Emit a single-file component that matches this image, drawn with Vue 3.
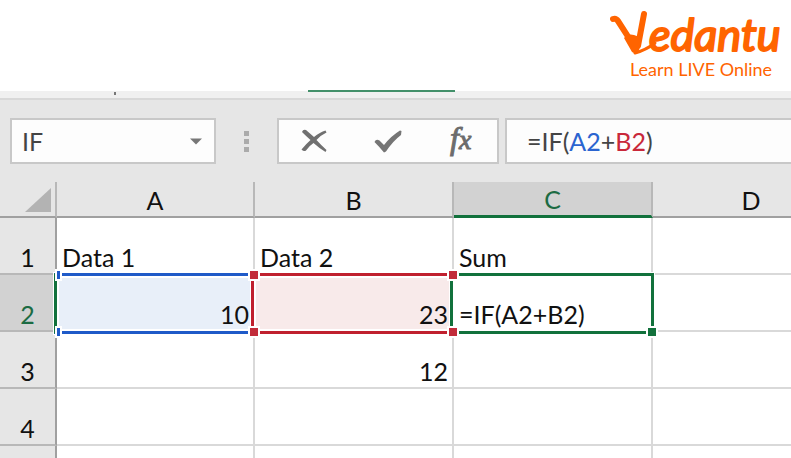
<script setup>
import { ref, computed } from 'vue'

const nameBox = ref('IF')
const formula = ref('=IF(A2+B2)')
const refColors = { A2: 'blue', B2: 'red' }
const tokens = computed(() =>
  formula.value.split(/([A-Z]+\d+)/).filter(Boolean).map((text) => ({ text, tone: refColors[text] || '' }))
)

const columns = ['A', 'B', 'C', 'D']
const rows = [
  { n: 1, cells: ['Data 1', 'Data 2', 'Sum', ''] },
  { n: 2, cells: [10, 23, '=IF(A2+B2)', ''] },
  { n: 3, cells: ['', 12, '', ''] },
  { n: 4, cells: ['', '', '', ''] },
  { n: '', cells: ['', '', '', ''] }
]
const rangeNames = ['range-a', 'range-b', 'range-c']
const rangeOf = (row, i) => (row.n === 2 ? rangeNames[i] : undefined)
</script>

<template>
  <main class="page">
    <header class="brand">
      <div class="logo">
        <svg class="wordmark" viewBox="0 0 172 48" role="img" aria-label="Vedantu">
          <path d="M3 11Q6 10 8 13L26 41" class="mark" />
          <path d="M34 6L28 38" class="mark" />
          <path d="M14 30Q18 25 24 27Q28 29 32 28L29 42L26 46L22 44Z" class="fill" />
          <path d="M25 45Q36 42 45 35" class="tail" />
          <text x="39" y="43" class="letters">edantu</text>
        </svg>
        <p class="tagline">Learn LIVE Online</p>
      </div>
    </header>

    <div class="ribbon"><span class="tick"></span><span class="tab-line"></span></div>

    <div class="formula-bar">
      <div class="name-box">
        <input v-model="nameBox" aria-label="Name box" class="name-input" />
        <button class="drop" aria-label="Open name list">
          <svg width="12" height="7" viewBox="0 0 12 7"><path d="M0 0.5H12L6 6.5Z" fill="#777" /></svg>
        </button>
      </div>
      <div class="grip"><i></i><i></i><i></i></div>
      <div class="actions">
        <button aria-label="Cancel">
          <svg width="28" height="26" viewBox="0 0 28 26">
            <path d="M1 4Q2 1 5 2L13 9Q19 4 24.500 2.500L25.500 4.500Q20 7 15.500 12Q20 17 25.500 22L24.500 24Q18 20 12.500 15Q8 18 5 22.500Q3 24 0.500 21.500Q5 16 9.500 12Q5 8 1 4Z" fill="#707070" />
          </svg>
        </button>
        <button aria-label="Enter">
          <svg width="28" height="26" viewBox="0 0 28 26">
            <path d="M0.500 14Q2 10.500 5.500 12.500L10 17Q17 8 26 2.500L27.500 3L27 7Q19 13 12 23.500L10 24.500Q6 19.500 0.500 14Z" fill="#757575" />
          </svg>
        </button>
        <button aria-label="Insert function" class="fx"><span class="f">f</span><span class="x">x</span></button>
      </div>
      <div class="formula">
        <div class="colored" aria-hidden="true"><span v-for="(t, i) in tokens" :key="i" :class="t.tone">{{ t.text }}</span></div>
        <input v-model="formula" aria-label="Formula" class="formula-input" spellcheck="false" />
      </div>
    </div>

    <div class="sheet">
      <table>
        <colgroup>
          <col class="c-head" /><col class="c-mid" /><col class="c-wide" /><col class="c-wide" /><col class="c-mid" />
        </colgroup>
        <thead>
          <tr>
            <th class="corner"><svg width="26" height="24" viewBox="0 0 26 24"><path d="M26 0V24H0Z" fill="#b3b3b3" /></svg></th>
            <th v-for="c in columns" :key="c" scope="col" :class="{ active: c === 'C' }">{{ c }}</th>
          </tr>
        </thead>
        <tbody>
          <tr v-for="(row, r) in rows" :key="r">
            <th scope="row" :class="{ active: row.n === 2 }">{{ row.n }}</th>
            <td v-for="(cell, i) in row.cells" :key="i" :class="{ num: typeof cell === 'number' }">
              <template v-if="rangeOf(row, i)">
                <div class="range" :class="rangeOf(row, i)"></div>
                <i class="handle top" :class="rangeOf(row, i)"></i>
                <i class="handle bottom" :class="rangeOf(row, i)"></i>
                <i v-if="i === 2" class="handle end"></i>
              </template>
              <span class="value">{{ cell }}</span>
            </td>
          </tr>
        </tbody>
      </table>
    </div>
  </main>
</template>

<style>
body { background: #fff; overflow: hidden; }
</style>

<style scoped>
.page { font-family: Lato, "Open Sans", sans-serif; height: 100vh; overflow: hidden; display: flex; flex-direction: column; color: #111; }
.brand { display: flex; justify-content: flex-end; flex: none; height: 91px; padding: 8px 9px 0 0; box-sizing: border-box; }
.logo { width: 172px; color: #ff6400; }
.wordmark { display: block; width: 172px; height: 48px; overflow: visible; }
.mark { fill: none; stroke: currentColor; stroke-width: 6; stroke-linecap: round; stroke-linejoin: round; }
.fill { fill: currentColor; }
.tail { fill: none; stroke: currentColor; stroke-width: 3; stroke-linecap: round; }
.letters { font: italic 45px Lato, sans-serif; fill: currentColor; stroke: currentColor; stroke-width: 2; stroke-linejoin: round; }
.tagline { margin: 2px 0 0; padding-left: 20px; font-size: 18px; line-height: 22px; white-space: nowrap; }

.ribbon { flex: none; position: relative; height: 9px; box-sizing: border-box; background: #f0f0f0; border-bottom: 2px solid #d8d8d8; }
.tab-line { position: absolute; left: 308px; top: -1px; width: 147px; height: 2px; background: #43906a; }
.tick { position: absolute; left: 114px; top: 1px; width: 2px; height: 3px; background: #777; }

.formula-bar { flex: none; display: flex; padding: 18px 0 18px 10px; background: #e6e6e6; }
.name-box, .actions, .formula { box-sizing: border-box; height: 46px; border: 2px solid #c8c8c8; background: #fdfdfd; }
.name-box { width: 206px; display: flex; align-items: center; }
.name-input { flex: 1; min-width: 0; padding: 0 0 0 10px; border: 0; outline: 0; background: none; font: 25px/42px Lato, sans-serif; color: #444; }
button { display: flex; align-items: center; justify-content: center; border: 0; padding: 0; background: none; }
.drop { width: 36px; height: 42px; }
.grip { width: 61px; display: flex; flex-direction: column; align-items: center; justify-content: center; gap: 3px; }
.grip i { width: 5px; height: 5px; background: #ababab; }
.actions { width: 222px; display: grid; grid-template-columns: repeat(3, 1fr); }
.fx { font: italic 32px/36px "Liberation Serif", serif; color: #6c6c6c; align-items: baseline; -webkit-text-stroke: 1px #6c6c6c; }
.fx .x { font-size: 28px; }
.formula { flex: 1; min-width: 0; margin-left: 6px; border-right: 0; display: grid; }
.colored, .formula-input { grid-area: 1 / 1; padding: 0 0 0 20px; font: 25px/42px Lato, sans-serif; white-space: pre; color: #444; }
.formula-input { border: 0; outline: 0; background: none; color: transparent; caret-color: #444; min-width: 0; }
.blue { color: #2b64d0; }
.red { color: #c9283a; }

.sheet { flex: 1; overflow: hidden; background: #fff; }
table { width: 851px; table-layout: fixed; border-collapse: separate; border-spacing: 0; }
.c-head { width: 57px; }
.c-wide { width: 199px; }
.c-mid { width: 198px; }
th, td { position: relative; box-sizing: border-box; height: 57px; border-right: 2px solid #d9d9d9; border-bottom: 2px solid #d9d9d9; vertical-align: bottom; text-align: left; font-size: 25px; line-height: 32px; font-weight: 400; white-space: nowrap; }
td { padding: 0 4px 0 5px; }
th { background: #e6e6e6; text-align: center; }
thead th { height: 36px; padding: 0; border-right-color: #b8b8b8; border-bottom-color: #a0a0a0; }
tbody th { padding: 0; border-right-color: #a0a0a0; border-bottom-color: #b8b8b8; }
th.active { background: #d2d2d2; color: #1c6b43; }
thead th.active { border-bottom: 3px solid #12713c; line-height: 31px; }
.corner svg { display: block; margin: 0 4px 4px auto; }
.num { text-align: right; }
.value { position: relative; z-index: 2; }

.range { position: absolute; z-index: 1; top: -2px; bottom: -4px; left: -4px; right: -3px; border: 3px solid; box-shadow: 0 0 0 1px #fff, inset 0 0 0 2px #fff; }
.range.range-a { left: -3px; border-color: #1f5ac8; border-left-color: #12713c; border-right: 0; background: #e8eff9; }
.range.range-b { border-color: #c0202e; border-right: 0; background: #f8eaea; }
.range.range-c { border-color: #12713c; background: #fff; }
.handle { position: absolute; z-index: 3; left: -5px; width: 8px; height: 8px; background: #c22c3a; box-shadow: 0 0 0 2px #fff; }
.handle.top { top: -4px; }
.handle.bottom { bottom: -6px; }
.handle.range-a { left: 0; width: 3px; background: #1f5ac8; }
.handle.end { left: auto; right: -5px; bottom: -6px; background: #12713c; }
</style>
